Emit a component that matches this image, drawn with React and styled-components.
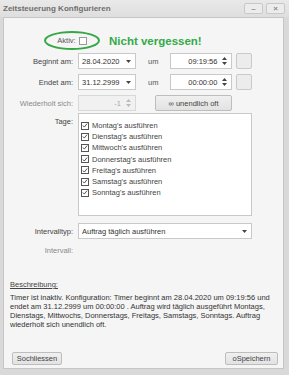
import React from "react";
import styled, { createGlobalStyle } from "styled-components";

const Global = createGlobalStyle`
  html, body { margin: 0; padding: 0; background: #d3d3d3; }
  body { font-family: "Liberation Sans", Arial, sans-serif; }
  * { box-sizing: border-box; }
`;

const Win = styled.div`
  width: 289px;
  height: 375px;
  background: #d9d9d9;
  display: flex;
  flex-direction: column;
  padding: 0 5px 6px 3px;
  font-size: 7.5px;
  color: #333;
`;

const TitleBar = styled.div`
  height: 17px;
  display: flex;
  align-items: center;
  margin: 0 -5px 0 -3px;
  padding: 0 4px 0 3px;
  background: linear-gradient(#e9e9e9, #dedede);
`;

const Title = styled.div`
  flex: 1;
  font-weight: bold;
  font-size: 8px;
  color: #6e6e6e;
`;

const TitleBtn = styled.div`
  width: 19px;
  height: 11px;
  margin-left: 3px;
  border: 1px solid #c8c8c8;
  border-radius: 2px;
  background: #ececec;
  display: flex;
  align-items: center;
  justify-content: center;
  color: #8a8a8a;
  font-size: 8px;
  font-weight: bold;
`;

const Panel = styled.div`
  flex: 1;
  background: #f5f5f5;
  border: 1px solid #c6c6c6;
  display: flex;
  flex-direction: column;
`;

const AktivRow = styled.div`
  display: flex;
  align-items: center;
  margin: 13px 0 0 40px;
`;

const Ellipse = styled.div`
  width: 56px;
  height: 19px;
  border: 2px solid #35a845;
  border-radius: 50%;
  display: flex;
  align-items: center;
  justify-content: center;
  gap: 3px;
  color: #555;
`;

const Box = styled.span`
  width: 8px;
  height: 8px;
  border: 1px solid ${(p) => (p.$dark ? "#555" : "#9a9a9a")};
  background: #fff;
  display: inline-flex;
  align-items: center;
  justify-content: center;
  flex-shrink: 0;
`;

const Reminder = styled.div`
  margin-left: 9px;
  color: #33aa48;
  font-weight: bold;
  font-size: 11.5px;
`;

const Row = styled.div`
  display: grid;
  grid-template-columns: 69px 1fr;
  column-gap: 5px;
  align-items: ${(p) => p.$align || "center"};
  margin-top: ${(p) => p.$mt}px;
  height: ${(p) => (p.$h ? `${p.$h}px` : "auto")};
`;

const Label = styled.div`
  text-align: right;
  color: ${(p) => (p.$muted ? "#8a8a8a" : "#444")};
  padding-top: ${(p) => p.$pt || 0}px;
`;

const Line = styled.div`
  display: flex;
  align-items: center;
`;

const Field = styled.div`
  width: ${(p) => p.$w}px;
  height: 16px;
  background: ${(p) => (p.$disabled ? "#f1f1f1" : "#fff")};
  border: 1px solid ${(p) => (p.$disabled ? "#d8d8d8" : "#c9c9c9")};
  display: flex;
  align-items: center;
  padding: 0 4px 0 3px;
  color: ${(p) => (p.$disabled ? "#aaa" : "#333")};
  justify-content: ${(p) => (p.$right ? "flex-end" : "space-between")};
  gap: 5px;
`;

const Um = styled.span`
  margin: 0 12px;
  color: #555;
`;

const SquareBtn = styled.div`
  width: 16px;
  height: 16px;
  margin-left: 4px;
  border: 1px solid #cacaca;
  border-radius: 2px;
  background: #ececec;
`;

const Button = styled.div`
  width: ${(p) => p.$w}px;
  height: ${(p) => p.$h || 16}px;
  margin-left: ${(p) => p.$ml || 0}px;
  border: 1px solid #bdbdbd;
  border-radius: 2px;
  background: linear-gradient(#f0f0f0, #e2e2e2);
  display: flex;
  align-items: center;
  justify-content: center;
  color: #444;
`;

const List = styled.div`
  width: 174px;
  height: 103px;
  background: #fff;
  border: 1px solid #c9c9c9;
  padding: 6px 0 0 2px;
  display: flex;
  flex-direction: column;
`;

const Item = styled.div`
  height: 11.2px;
  display: flex;
  align-items: center;
  gap: 3px;
  color: #444;
`;

const Desc = styled.div`
  padding: 0 8px 0 6px;
`;

const DescHead = styled.div`
  margin-top: 24px;
  text-decoration: underline;
  color: #444;
  line-height: 10px;
`;

const DescText = styled.div`
  margin-top: 2.5px;
  line-height: 9.3px;
  color: #333;
`;

const Footer = styled.div`
  margin-top: auto;
  display: flex;
  justify-content: space-between;
  padding: 0 5px 3px 8px;
`;

const Arrow = () => (
  <svg width="5" height="3" viewBox="0 0 5 3">
    <path d="M0 0h5L2.5 3z" fill="#444" />
  </svg>
);

const Spin = ({ c = "#444" }) => (
  <svg width="5" height="8" viewBox="0 0 5 8">
    <path d="M0 3h5L2.5 0z M0 5h5L2.5 8z" fill={c} />
  </svg>
);

const Check = () => (
  <svg width="7" height="7" viewBox="0 0 7 7">
    <path d="M1 3.5l1.7 1.8L6 1.2" stroke="#333" strokeWidth="1" fill="none" />
  </svg>
);

const days = ["Montag", "Dienstag", "Mittwoch", "Donnerstag", "Freitag", "Samstag", "Sonntag"];

export default function App() {
  return (
    <>
      <Global />
      <Win>
        <TitleBar>
          <Title>Zeitsteuerung Konfigurieren</Title>
          <TitleBtn>–</TitleBtn>
          <TitleBtn>×</TitleBtn>
        </TitleBar>
        <Panel>
          <AktivRow>
            <Ellipse>
              <span>Aktiv:</span>
              <Box />
            </Ellipse>
            <Reminder>Nicht vergessen!</Reminder>
          </AktivRow>

          <Row $mt={3}>
            <Label>Beginnt am:</Label>
            <Line>
              <Field $w={58}>
                <span>28.04.2020</span>
                <Arrow />
              </Field>
              <Um>um</Um>
              <Field $w={62} $right>
                <span>09:19:56</span>
                <Spin />
              </Field>
              <SquareBtn />
            </Line>
          </Row>

          <Row $mt={5}>
            <Label>Endet am:</Label>
            <Line>
              <Field $w={58}>
                <span>31.12.2999</span>
                <Arrow />
              </Field>
              <Um>um</Um>
              <Field $w={62} $right>
                <span>00:00:00</span>
                <Spin />
              </Field>
              <SquareBtn />
            </Line>
          </Row>

          <Row $mt={5}>
            <Label $muted>Wiederholt sich:</Label>
            <Line>
              <Field $w={58} $disabled $right>
                <span>-1</span>
                <Spin c="#bbb" />
              </Field>
              <Button $w={77} $ml={19}>∞ unendlich oft</Button>
            </Line>
          </Row>

          <Row $mt={2} $align="start">
            <Label $pt={4}>Tage:</Label>
            <List>
              {days.map((d) => (
                <Item key={d}>
                  <Box $dark>
                    <Check />
                  </Box>
                  <span>{d}'s ausführen</span>
                </Item>
              ))}
            </List>
          </Row>

          <Row $mt={7}>
            <Label>Intervalltyp:</Label>
            <Field $w={174}>
              <span>Auftrag täglich ausführen</span>
              <Arrow />
            </Field>
          </Row>

          <Row $mt={5} $h={12}>
            <Label $muted>Intervall:</Label>
            <span />
          </Row>

          <Desc>
            <DescHead>Beschreibung:</DescHead>
            <DescText>
              Timer ist inaktiv. Konfiguration: Timer beginnt am 28.04.2020 um 09:19:56 und endet am
              31.12.2999 um 00:00:00 . Auftrag wird täglich ausgeführt Montags, Dienstags, Mittwochs,
              Donnerstags, Freitags, Samstags, Sonntags. Auftrag wiederholt sich unendlich oft.
            </DescText>
          </Desc>

          <Footer>
            <Button $w={50} $h={13}>Sochliessen</Button>
            <Button $w={53} $h={13}>oSpeichern</Button>
          </Footer>
        </Panel>
      </Win>
    </>
  );
}
